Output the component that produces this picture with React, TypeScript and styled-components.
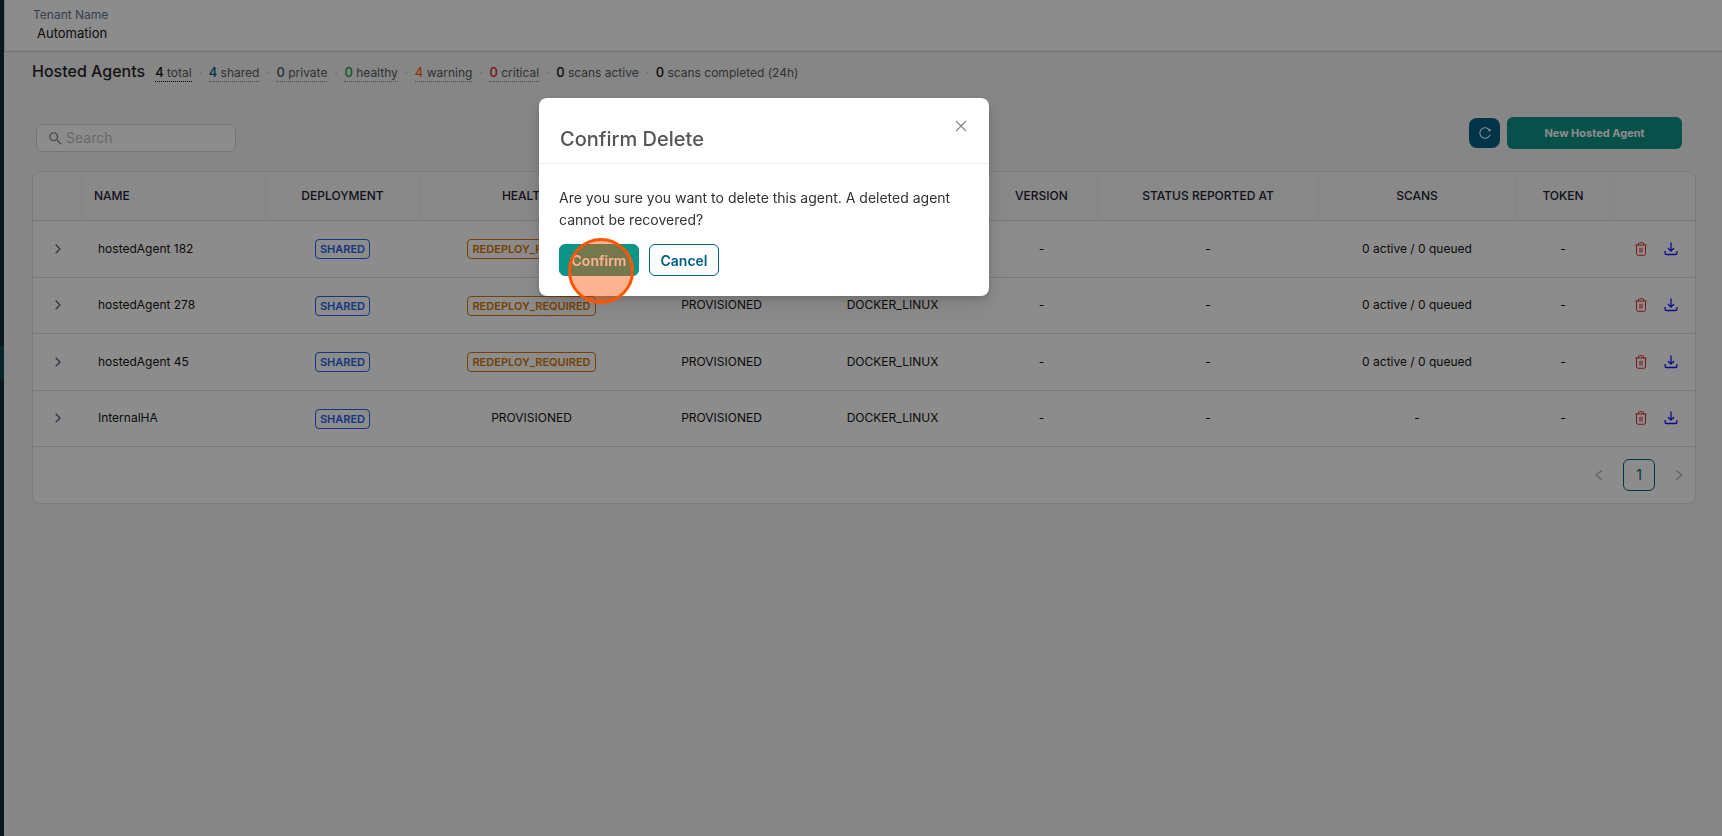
import React from "react";
import styled, { createGlobalStyle } from "styled-components";
import { AiOutlineClose, AiOutlineLeft, AiOutlineReload, AiOutlineRight } from "react-icons/ai";
import { MdSearch } from "react-icons/md";
import { ChevronRight } from "lucide-react";

const GlobalStyle = createGlobalStyle`
  *, *::before, *::after { box-sizing: border-box; }
  body {
    margin: 0;
    background: #f5f5f5;
    color: #141414;
    font-family: Inter, "Open Sans", sans-serif;
    font-size: 12px;
    line-height: 20px;
  }
  button, input { font: inherit; }
`;

const Page = styled.div`
  display: flex;
  min-height: 100vh;
`;

const Rail = styled.nav`
  display: flex;
  flex-direction: column;
  width: 4px;
  padding-top: 346px;
  background: #122a36;
`;

const RailCurrent = styled.a`
  height: 34px;
  background: #10454a;
`;

const Content = styled.div`
  flex: 1;
  min-width: 0;
`;

const TopBar = styled.header`
  height: 52px;
  padding: 5px 28px 0;
  background: #fff;
  border-left: 1px solid #dcdcdc;
  border-bottom: 1px solid #d2d2d2;
`;

const TenantLabel = styled.div`
  line-height: 20px;
  color: #64748b;
`;

const TenantValue = styled.div`
  padding-left: 4px;
  font-size: 13px;
  line-height: 16px;
`;

const Main = styled.main`
  padding: 7px 26px 0 28px;
`;

const Heading = styled.div`
  display: flex;
  align-items: center;
  gap: 10px;
`;

const Title = styled.h1`
  margin: 0;
  font-size: 16px;
  font-weight: 500;
  line-height: 24px;
  color: #262626;
`;

const Stats = styled.ul`
  display: flex;
  margin: 0;
  padding: 4px 0 0;
  list-style: none;
`;

const StatItem = styled.li`
  display: flex;
  line-height: 17px;

  & + &::before {
    content: "·";
    width: 17px;
    text-align: center;
    color: #bfbfbf;
  }
`;

const Stat = styled.span<{ $line?: string }>`
  height: 18px;
  color: #595959;
  border-bottom: 1px dotted ${(p) => p.$line ?? "transparent"};
`;

const Count = styled.b<{ $color: string }>`
  font-size: 13px;
  font-weight: 500;
  color: ${(p) => p.$color};
`;

const Toolbar = styled.div`
  display: flex;
  align-items: flex-start;
  justify-content: space-between;
  margin-top: 34px;
  padding: 0 14px 0 4px;
`;

const ToolbarActions = styled.div`
  display: flex;
  align-items: center;
  gap: 7px;
`;

const SearchBox = styled.label`
  display: flex;
  align-items: center;
  gap: 2px;
  width: 200px;
  height: 28px;
  margin-top: 7px;
  padding: 0 8px 0 10px;
  color: #8c8c8c;
  background: #fff;
  border: 1px solid #d4d4d4;
  border-radius: 6px;
`;

const SearchInput = styled.input`
  flex: 1;
  min-width: 0;
  padding: 0;
  font-size: 14px;
  background: transparent;
  border: 0;
  outline: 0;

  &::placeholder { color: #bfbfbf; opacity: 1; }
`;

const RefreshButton = styled.button`
  display: grid;
  place-items: center;
  width: 31px;
  height: 30px;
  padding: 0;
  color: #fff;
  background: #005f83;
  border: 0;
  border-radius: 8px;
`;

const NewButton = styled.button`
  width: 175px;
  height: 32px;
  padding: 0;
  font-size: 11px;
  font-weight: 700;
  color: #fff;
  background: #0d9488;
  border: 0;
  border-radius: 6px;
`;

const Card = styled.section`
  margin-top: 19px;
  overflow: hidden;
  background: #fff;
  border: 1px solid #e2e2e2;
  border-radius: 8px;
`;

const Table = styled.table`
  width: 100%;
  height: 275px;
  table-layout: fixed;
  border-collapse: separate;
  border-spacing: 0;
`;

const Col = styled.col<{ $width: number }>`
  width: ${(p) => p.$width}px;
`;

const HeadCell = styled.th<{ $left?: boolean; $filterable?: boolean }>`
  height: 49px;
  padding: 0 ${(p) => (p.$filterable ? 24 : 12)}px 0 12px;
  font-weight: 500;
  text-align: ${(p) => (p.$left ? "left" : "center")};
  color: #1e2233;
  background: #fafafa;
  border-bottom: 1px solid #d9d9d9;

  & + & { border-left: 1px solid #f0f0f0; }
`;

const Cell = styled.td<{ $left?: boolean }>`
  padding: 0 16px 0 17px;
  text-align: ${(p) => (p.$left ? "left" : "center")};
  border-bottom: 1px solid #dedede;
`;

const Tag = styled.span<{ $color: string }>`
  display: inline-block;
  height: 20px;
  padding: 0 4px;
  font-size: 11px;
  font-weight: 600;
  line-height: 18px;
  vertical-align: middle;
  color: ${(p) => p.$color};
  border: 1px solid currentColor;
  border-radius: 4px;
`;

const IconButton = styled.button<{ $color: string }>`
  display: grid;
  place-items: center;
  padding: 0;
  color: ${(p) => p.$color};
  background: none;
  border: 0;
`;

const ExpandButton = styled(IconButton)`
  margin: 0 auto;
`;

const Actions = styled.div`
  display: flex;
  justify-content: center;
  gap: 16px;
  margin-left: 6px;
`;

const Pagination = styled.nav`
  display: flex;
  align-items: center;
  justify-content: flex-end;
  gap: 17px;
  height: 56px;
  padding-right: 9px;
`;

const PageButton = styled.button`
  width: 32px;
  height: 32px;
  padding: 0;
  font-size: 14px;
  color: #005f83;
  background: transparent;
  border: 1px solid #005f83;
  border-radius: 6px;
`;

const Backdrop = styled.div`
  position: fixed;
  inset: 0;
  display: flex;
  align-items: flex-start;
  justify-content: center;
  padding: 98px 194px 0 0;
  background: rgba(0, 0, 0, 0.45);
`;

const Dialog = styled.div`
  width: 450px;
  background: #fff;
  border-radius: 8px;
  box-shadow: 0 6px 16px rgba(0, 0, 0, 0.08), 0 3px 6px rgba(0, 0, 0, 0.12), 0 9px 28px 8px rgba(0, 0, 0, 0.05);
`;

const DialogHeader = styled.div`
  display: flex;
  align-items: flex-start;
  justify-content: space-between;
  height: 66px;
  padding: 20px 20px 0 21px;
  border-bottom: 1px solid #f0f0f0;
`;

const DialogTitle = styled.h2`
  margin: 7px 0 0;
  font-size: 20px;
  font-weight: 500;
  line-height: 28px;
  color: #555;
`;

const DialogBody = styled.div`
  padding: 23px 20px 20px;
`;

const Message = styled.p`
  margin: 0 0 13px;
  font-size: 14px;
  line-height: 22px;
  color: #333;
`;

const DialogActions = styled.div`
  position: relative;
  display: flex;
  gap: 10px;
`;

const DialogButton = styled.button<{ $primary?: boolean }>`
  width: ${(p) => (p.$primary ? 80 : 70)}px;
  height: 32px;
  padding: 1px 0 0;
  font-size: 14px;
  font-weight: 600;
  color: ${(p) => (p.$primary ? "#fff" : "#005f83")};
  background: ${(p) => (p.$primary ? "#0d9488" : "#fff")};
  border: 1px solid ${(p) => (p.$primary ? "#0d9488" : "#005f83")};
  border-radius: 6px;
`;

const ClickMarker = styled.span`
  position: absolute;
  top: -6px;
  left: 9px;
  width: 66px;
  height: 66px;
  background: rgba(255, 81, 0, 0.43);
  border: 3px solid #ff5500;
  border-radius: 50%;
  pointer-events: none;
`;

const TrashIcon = () => (
  <svg width="14" height="14" viewBox="0 0 14 14" fill="none" stroke="currentColor" aria-hidden="true">
    <path d="M1.2 3h11.6M4.4 3V1.9Q4.4.7 5.6.7h2.8q1.2 0 1.2 1.2V3M2.5 3.2v8.4q0 1.7 1.7 1.7h5.6q1.7 0 1.7-1.7V3.2M6 5.8v4.8M8 5.8v4.8" />
  </svg>
);

const DownloadIcon = () => (
  <svg width="14" height="14" viewBox="0 0 14 14" fill="none" stroke="currentColor" strokeWidth="1.3" aria-hidden="true">
    <path d="M7 .6v8.4M3.9 6 7 9.1 10.1 6M1.1 9v2.4q0 1.1 1.1 1.1h9.6q1.1 0 1.1-1.1V9" />
  </svg>
);

const stats = [
  { count: 4, label: "total", color: "#141414", line: "#141414" },
  { count: 4, label: "shared", color: "#005f83", line: "#8c8c8c" },
  { count: 0, label: "private", color: "#475569", line: "#8c8c8c" },
  { count: 0, label: "healthy", color: "#16a34a", line: "#8c8c8c" },
  { count: 4, label: "warning", color: "#ff6a13", line: "#8c8c8c" },
  { count: 0, label: "critical", color: "#dc2626", line: "#8c8c8c" },
  { count: 0, label: "scans active", color: "#141414" },
  { count: 0, label: "scans completed (24h)", color: "#141414" },
];

const columnWidths = [48, 184, 154, 224, 156, 186, 112, 221, 197, 95, 85];
const headings = ["", "NAME", "DEPLOYMENT", "HEALTH", "", "", "VERSION", "STATUS REPORTED AT", "SCANS", "TOKEN", ""];

const agents = [
  { name: "hostedAgent 182", redeploy: true, scans: "0 active / 0 queued" },
  { name: "hostedAgent 278", redeploy: true, scans: "0 active / 0 queued" },
  { name: "hostedAgent 45", redeploy: true, scans: "0 active / 0 queued" },
  { name: "InternalHA", redeploy: false, scans: "-" },
];

export default function App() {
  return (
    <>
      <GlobalStyle />
      <Page>
        <Rail>
          <RailCurrent href="#agents" aria-label="Hosted Agents" />
        </Rail>
        <Content>
          <TopBar>
            <TenantLabel>Tenant Name</TenantLabel>
            <TenantValue>Automation</TenantValue>
          </TopBar>
          <Main>
            <Heading>
              <Title>Hosted Agents</Title>
              <Stats>
                {stats.map((s) => (
                  <StatItem key={s.label}>
                    <Stat $line={s.line}>
                      <Count $color={s.color}>{s.count}</Count> {s.label}
                    </Stat>
                  </StatItem>
                ))}
              </Stats>
            </Heading>
            <Toolbar>
              <SearchBox>
                <MdSearch size={17} aria-hidden="true" />
                <SearchInput type="search" placeholder="Search" aria-label="Search" />
              </SearchBox>
              <ToolbarActions>
                <RefreshButton aria-label="Refresh">
                  <AiOutlineReload size={14} />
                </RefreshButton>
                <NewButton>New Hosted Agent</NewButton>
              </ToolbarActions>
            </Toolbar>
            <Card>
              <Table>
                <colgroup>
                  {columnWidths.map((w, i) => (
                    <Col key={i} $width={w} />
                  ))}
                </colgroup>
                <thead>
                  <tr>
                    {headings.map((h, i) => (
                      <HeadCell key={i} scope="col" $left={i === 1} $filterable={h === "HEALTH"}>
                        {h}
                      </HeadCell>
                    ))}
                  </tr>
                </thead>
                <tbody>
                  {agents.map((a) => (
                    <tr key={a.name}>
                      <Cell>
                        <ExpandButton $color="#475569" aria-label={`Expand ${a.name}`}>
                          <ChevronRight size={16} strokeWidth={1.6} />
                        </ExpandButton>
                      </Cell>
                      <Cell $left>{a.name}</Cell>
                      <Cell>
                        <Tag $color="#2563eb">SHARED</Tag>
                      </Cell>
                      <Cell>{a.redeploy ? <Tag $color="#d97706">REDEPLOY_REQUIRED</Tag> : "PROVISIONED"}</Cell>
                      <Cell>PROVISIONED</Cell>
                      <Cell>DOCKER_LINUX</Cell>
                      <Cell>-</Cell>
                      <Cell>-</Cell>
                      <Cell>{a.scans}</Cell>
                      <Cell>-</Cell>
                      <Cell>
                        <Actions>
                          <IconButton $color="#dc2626" aria-label={`Delete ${a.name}`}>
                            <TrashIcon />
                          </IconButton>
                          <IconButton $color="#1a1aff" aria-label={`Download ${a.name}`}>
                            <DownloadIcon />
                          </IconButton>
                        </Actions>
                      </Cell>
                    </tr>
                  ))}
                </tbody>
              </Table>
              <Pagination aria-label="Pages">
                <IconButton $color="#a6a6a6" aria-label="Previous page">
                  <AiOutlineLeft size={14} />
                </IconButton>
                <PageButton aria-current="page">1</PageButton>
                <IconButton $color="#a6a6a6" aria-label="Next page">
                  <AiOutlineRight size={14} />
                </IconButton>
              </Pagination>
            </Card>
          </Main>
        </Content>
      </Page>
      <Backdrop>
        <Dialog role="dialog" aria-modal="true" aria-labelledby="confirm-title">
          <DialogHeader>
            <DialogTitle id="confirm-title">Confirm Delete</DialogTitle>
            <IconButton $color="#8c8c8c" aria-label="Close">
              <AiOutlineClose size={16} />
            </IconButton>
          </DialogHeader>
          <DialogBody>
            <Message>Are you sure you want to delete this agent. A deleted agent cannot be recovered?</Message>
            <DialogActions>
              <DialogButton $primary>Confirm</DialogButton>
              <DialogButton>Cancel</DialogButton>
              <ClickMarker />
            </DialogActions>
          </DialogBody>
        </Dialog>
      </Backdrop>
    </>
  );
}
